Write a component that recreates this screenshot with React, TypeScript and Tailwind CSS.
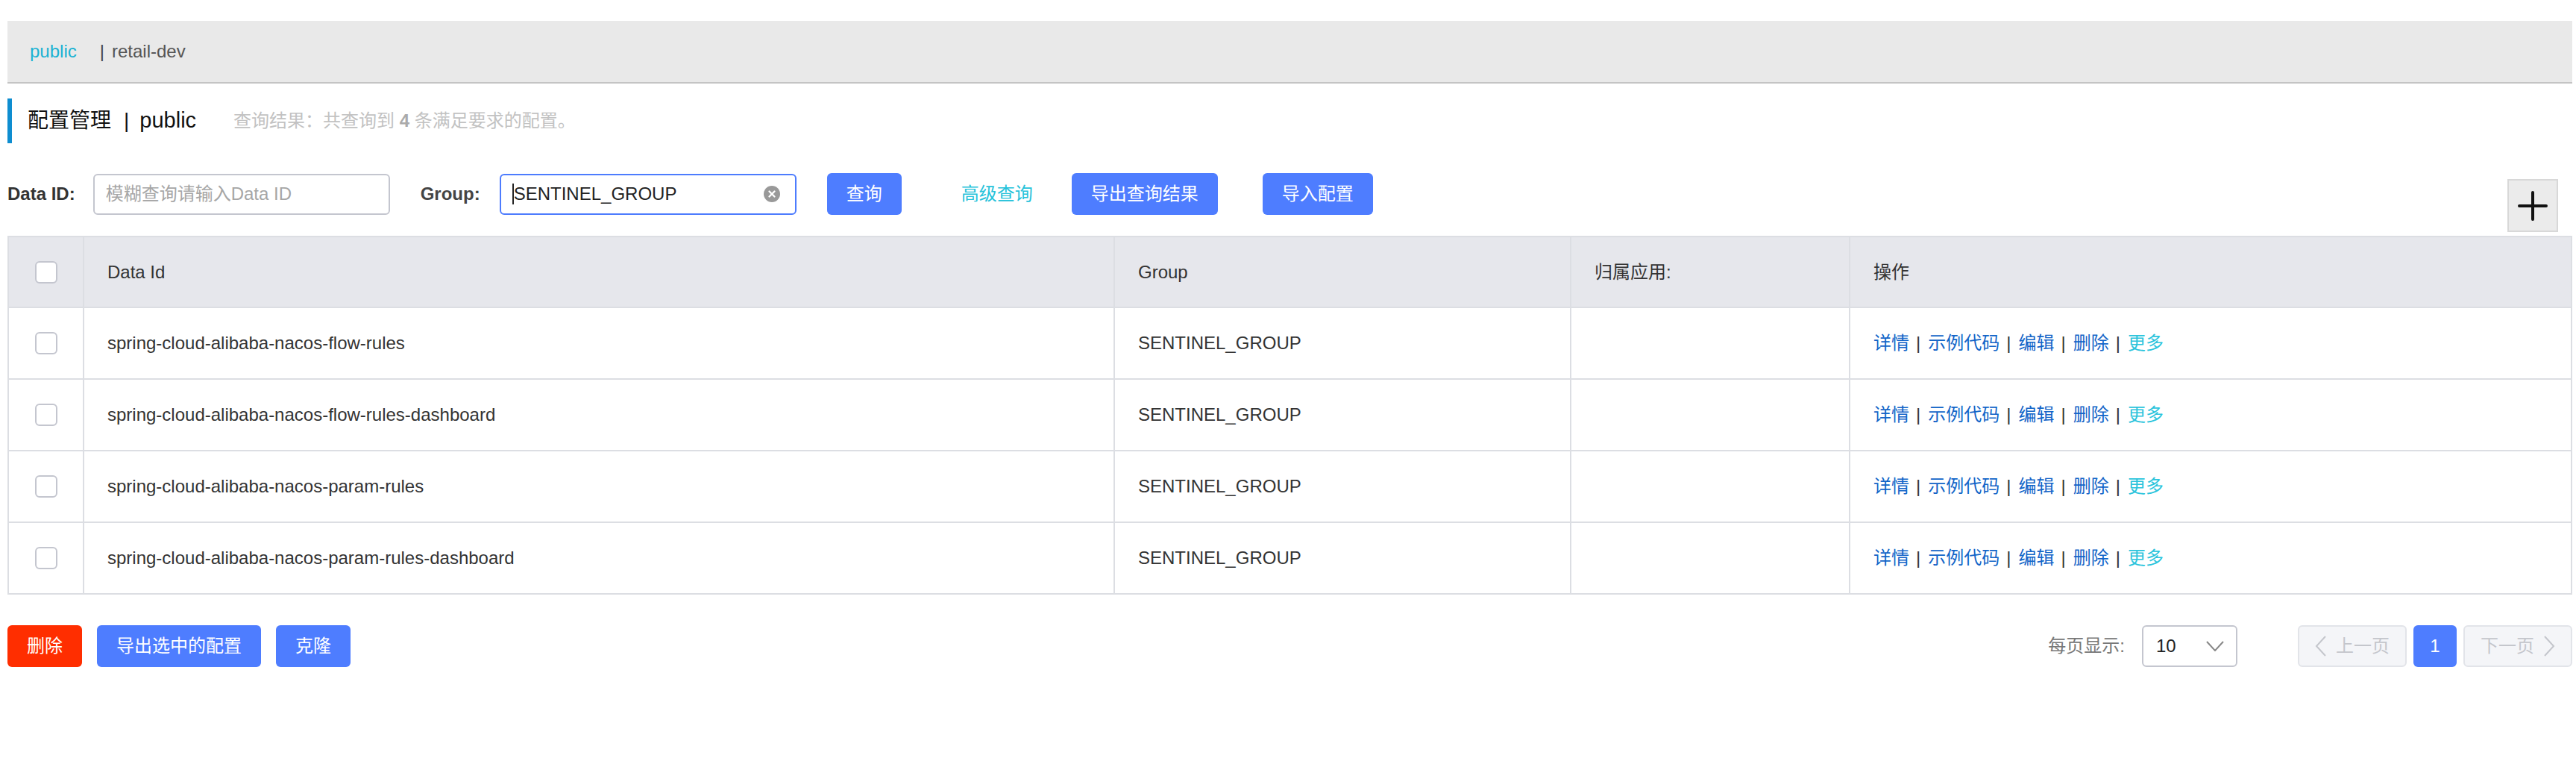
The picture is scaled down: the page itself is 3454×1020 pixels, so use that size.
import { X } from 'lucide-react';

const rows = [
  'spring-cloud-alibaba-nacos-flow-rules',
  'spring-cloud-alibaba-nacos-flow-rules-dashboard',
  'spring-cloud-alibaba-nacos-param-rules',
  'spring-cloud-alibaba-nacos-param-rules-dashboard',
];

const Checkbox = () => (
  <span className="block w-[30px] h-[30px] rounded-[6px] border-2 border-[#c4c6cf] bg-white"></span>
);

const Sep = () => <span className="ml-[9px] mr-[10px] text-[#333]">|</span>;

const App = () => {
  return (
    <div className="min-h-screen bg-white pl-[10px] pr-[5px] font-['Liberation_Sans','Noto_Sans_CJK_SC',sans-serif] text-[24px] text-[#333]">
      {/* namespace bar */}
      <div className="mt-[28px] h-[84px] bg-[#e9e9e9] border-b-2 border-[#c4c4c4] flex items-center pl-[30px] pr-[4px]">
        <span className="text-[#1ab2d3]">public</span>
        <span className="ml-[31px] text-[#444]">|</span>
        <span className="ml-[10px] text-[#555]">retail-dev</span>
      </div>

      {/* title */}
      <div className="mt-[20px] h-[60px] border-l-[6px] border-[#0e8dd0] pl-[21px] flex items-center">
        <span className="text-[28px] text-[#111]">配置管理</span>
        <span className="ml-[17px] mr-[14px] text-[28px] text-[#111]">|</span>
        <span className="text-[29px] text-[#111]">public</span>
        <span className="ml-[50px] text-[#c2c2c2]">
          查询结果：共查询到 <b className="text-[#aaa]">4</b> 条满足要求的配置。
        </span>
      </div>

      {/* search row */}
      <div className="mt-[40px] flex items-start">
        <div className="h-[56px] flex items-center">
          <span className="font-bold text-[#333]">Data ID:</span>
          <div className="ml-[24px] w-[398px] h-[55px] rounded-[6px] border-2 border-[#c4c6cf] flex items-center pl-[15px] text-[#a6a6a6]">
            模糊查询请输入Data ID
          </div>
          <span className="ml-[41px] font-bold text-[#444]">Group:</span>
          <div className="ml-[26px] w-[398px] h-[55px] rounded-[6px] border-2 border-[#4d7cfe] flex items-center pl-[15px] pr-[20px]">
            <span className="w-[2px] h-[28px] bg-[#222]"></span>
            <span className="text-[#222]">SENTINEL_GROUP</span>
            <span className="ml-auto w-[22px] h-[22px] rounded-full bg-[#999] flex items-center justify-center">
              <X size={14} strokeWidth={4} color="#fff" />
            </span>
          </div>
          <button className="ml-[41px] w-[100px] h-[56px] rounded-[6px] bg-[#4e7dff] text-white">查询</button>
          <span className="ml-[80px] text-[#26c2da]">高级查询</span>
          <button className="ml-[52px] w-[196px] h-[56px] rounded-[6px] bg-[#4e7dff] text-white">导出查询结果</button>
          <button className="ml-[60px] w-[148px] h-[56px] rounded-[6px] bg-[#4e7dff] text-white">导入配置</button>
        </div>
        <button className="ml-auto mr-[19px] mt-[8px] w-[68px] h-[71px] bg-[#ebebeb] border-2 border-[#d8d8d8] flex items-center justify-center">
          <svg width="40" height="40" viewBox="0 0 40 40">
            <path d="M20 2 V38 M2 20 H38" stroke="#111" strokeWidth="4" strokeLinecap="round" />
          </svg>
        </button>
      </div>

      {/* table */}
      <div className="mt-[5px] grid grid-cols-[99px_1380px_610px_372px_1fr] gap-[2px] bg-[#dcdee3] p-[2px]">
        <div className="h-[93px] bg-[#e6e7ec] flex items-center justify-center"><Checkbox /></div>
        <div className="h-[93px] bg-[#e6e7ec] flex items-center pl-[31px]">Data Id</div>
        <div className="h-[93px] bg-[#e6e7ec] flex items-center pl-[31px]">Group</div>
        <div className="h-[93px] bg-[#e6e7ec] flex items-center pl-[31px]">归属应用:</div>
        <div className="h-[93px] bg-[#e6e7ec] flex items-center pl-[31px]">操作</div>
        {rows.map((r) => (
          <>
            <div key={r + 'c'} className="h-[94px] bg-white flex items-center justify-center"><Checkbox /></div>
            <div key={r + 'd'} className="h-[94px] bg-white flex items-center pl-[31px]">{r}</div>
            <div key={r + 'g'} className="h-[94px] bg-white flex items-center pl-[31px]">SENTINEL_GROUP</div>
            <div key={r + 'a'} className="h-[94px] bg-white"></div>
            <div key={r + 'o'} className="h-[94px] bg-white flex items-center pl-[31px] text-[#1265c8]">
              <span>详情</span><Sep />
              <span>示例代码</span><Sep />
              <span>编辑</span><Sep />
              <span>删除</span><Sep />
              <span className="text-[#2bc4dc]">更多</span>
            </div>
          </>
        ))}
      </div>

      {/* footer */}
      <div className="mt-[41px] flex items-center">
        <button className="w-[100px] h-[56px] rounded-[6px] bg-[#ff2e00] text-white">删除</button>
        <button className="ml-[20px] w-[220px] h-[56px] rounded-[6px] bg-[#4e7dff] text-white">导出选中的配置</button>
        <button className="ml-[20px] w-[100px] h-[56px] rounded-[6px] bg-[#4e7dff] text-white">克隆</button>

        <span className="ml-auto text-[#777]">每页显示:</span>
        <div className="ml-[23px] w-[128px] h-[56px] rounded-[6px] border-2 border-[#c4c6cf] flex items-center pl-[17px] pr-[16px]">
          <span className="text-[#222]">10</span>
          <svg className="ml-auto" width="24" height="14" viewBox="0 0 24 14">
            <path d="M1 1 L12 13 L23 1" fill="none" stroke="#888" strokeWidth="2" />
          </svg>
        </div>
        <div className="ml-[81px] w-[146px] h-[56px] rounded-[6px] border-2 border-[#e2e4e9] bg-[#f4f5f8] flex items-center justify-center gap-[12px] text-[#c4c6cc]">
          <svg width="16" height="28" viewBox="0 0 16 28">
            <path d="M14 1 L2 14 L14 27" fill="none" stroke="#c4c6cc" strokeWidth="2" />
          </svg>
          <span>上一页</span>
        </div>
        <div className="ml-[9px] w-[58px] h-[56px] rounded-[6px] bg-[#4e7dff] text-white flex items-center justify-center">1</div>
        <div className="ml-[9px] w-[146px] h-[56px] rounded-[6px] border-2 border-[#e2e4e9] bg-[#f4f5f8] flex items-center justify-center gap-[12px] text-[#c4c6cc]">
          <span>下一页</span>
          <svg width="16" height="28" viewBox="0 0 16 28">
            <path d="M2 1 L14 14 L2 27" fill="none" stroke="#c4c6cc" strokeWidth="2" />
          </svg>
        </div>
      </div>
    </div>
  );
};

export default App;
